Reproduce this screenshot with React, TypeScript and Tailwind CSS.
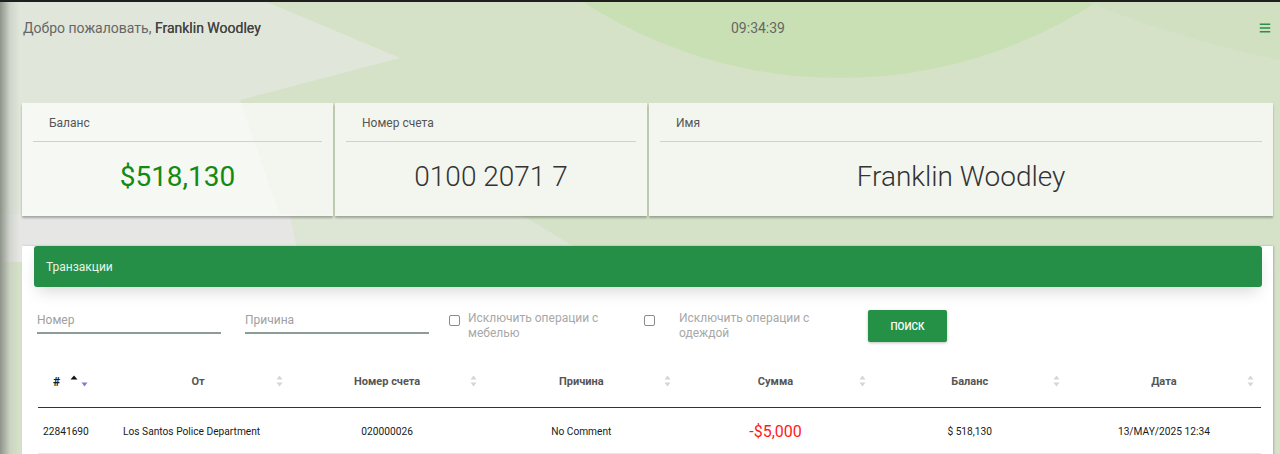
import { FaBars } from 'react-icons/fa'

const SortIcon = () => (
  <svg width="7" height="12" viewBox="0 0 7 12" className="absolute right-[7px] top-[15px]">
    <path d="M3.5 0.5L6.5 4.5H0.5z" fill="#d6d6d6" />
    <path d="M3.5 11.5L0.5 7.5H6.5z" fill="#d6d6d6" />
  </svg>
)

const ActiveSort = () => (
  <svg width="18" height="12" viewBox="0 0 18 12" className="ml-[10px]">
    <path d="M4 0.5L7.5 4.5H0.5z" fill="#111" />
    <path d="M14.5 11.5L11.5 7.5H17.5z" fill="#7b7fdc" />
  </svg>
)

const InfoCard = ({ label, value, valueClass }: { label: string; value: string; valueClass: string }) => (
  <div className="bg-white/70 px-[11px] pt-[10px] pb-[4px] shadow-[0_2px_2px_rgba(0,0,0,0.28)]">
    <div className="h-[28px] pl-[16px] pt-[1px] text-[12px] leading-[18px] text-[#555]">{label}</div>
    <div className="border-t border-[#cfd2cc]" />
    <div className={`flex h-[70px] items-center justify-center text-[28px] ${valueClass}`}>{value}</div>
  </div>
)

const Checkbox = ({ text, gap }: { text: string; gap: string }) => (
  <div className={`mt-[3px] flex items-start ${gap}`}>
    <div className="mt-[4px] h-[11px] w-[11px] shrink-0 rounded-[2px] border border-[#8a8a8a] bg-white" />
    <div className="w-[140px] text-[12px] leading-[15px] text-[#a8a8a8]">{text}</div>
  </div>
)

const columns = ['От', 'Номер счета', 'Причина', 'Сумма', 'Баланс', 'Дата']

export default function App() {
  return (
    <div className="relative min-h-[454px] w-full overflow-hidden bg-[#d5e2c7] font-['Roboto','Liberation_Sans',sans-serif]">
      {/* background decoration */}
      <svg className="absolute inset-0" width="1280" height="454" viewBox="0 0 1280 454">
        <polygon points="0,0 262,0 400,58 240,100 290,245 0,260" fill="#e0e6da" />
        <polygon points="0,214 290,214 300,262 0,262" fill="#e6e7e4" />
        <polygon points="290,214 520,214 600,262 300,262" fill="#dde5d4" />
        <circle cx="840" cy="-394" r="472" fill="#c9e0b4" />
        <path d="M1083 0 Q1180 40 1280 60 L1280 0z" fill="#d1e0c0" />
      </svg>
      <div className="absolute inset-y-0 left-0 w-[20px] bg-gradient-to-r from-[#8f948b] via-[#c4c9c0]/60 to-transparent" />
      <div className="relative h-[2px] bg-[#1f1f1f]" />

      <div className="relative pl-[22px] pr-[7px]">
        {/* top bar */}
        <div className="flex h-[52px] items-center text-[14px]">
          <div className="w-[709px] pl-[1px] text-[#666]">
            Добро пожаловать, <span className="text-[#444] [text-shadow:0_0_0.2px_#444]">Franklin Woodley</span>
          </div>
          <div className="text-[#666]">09:34:39</div>
          <div className="ml-auto mr-[2px] text-[#2b8f48]">
            <FaBars size={12} />
          </div>
        </div>

        {/* info cards */}
        <div className="mt-[49px] grid grid-cols-[311px_312px_1fr] gap-[2px]">
          <InfoCard label="Баланс" value="$518,130" valueClass="text-[#138a13]" />
          <InfoCard label="Номер счета" value="0100 2071 7" valueClass="font-light text-[#333]" />
          <InfoCard label="Имя" value="Franklin Woodley" valueClass="font-light text-[#333]" />
        </div>

        {/* transactions */}
        <div className="mt-[45px] bg-white pb-[10px] shadow-[1px_0_2px_rgba(0,0,0,0.2)]">
          <div className="relative -mt-[15px] mr-[11px] ml-[12px] flex h-[41px] items-center rounded-[3px] bg-[#258f47] px-[12px] text-[12px] text-[#eaf6e4] shadow-[0_8px_16px_-4px_rgba(0,0,0,0.16)]">
            Транзакции
          </div>

          <div className="mt-[21px] flex items-start pl-[15px]">
            <div className="h-[26px] w-[184px] border-b-2 border-[#8c9d97] text-[12px] leading-[24px] text-[#a0a0a0]">
              Номер
            </div>
            <div className="ml-[24px] h-[26px] w-[184px] border-b-2 border-[#8c9d97] text-[12px] leading-[24px] text-[#a0a0a0]">
              Причина
            </div>
            <div className="ml-[20px]">
              <Checkbox text="Исключить операции с мебелью" gap="gap-[8px]" />
            </div>
            <div className="ml-[36px]">
              <Checkbox text="Исключить операции с одеждой" gap="gap-[24px]" />
            </div>
            <button className="mt-[2px] ml-[49px] h-[32px] w-[79px] rounded-[2px] bg-[#249147] text-[10px] font-medium text-white shadow-[0_1px_3px_rgba(0,0,0,0.25)]">
              ПОИСК
            </button>
          </div>

          {/* table */}
          <div className="mt-[18px] mr-[12px] ml-[16px]">
            <div className="grid h-[48px] grid-cols-[68px_184px_repeat(5,1fr)] border-b-[1.5px] border-[#333] text-[11px] font-bold text-[#555]">
              <div className="flex items-start pt-[15px] pl-[15px] text-[#1a1a1a]">
                <span className="text-[12px] leading-[14px]">#</span>
                <ActiveSort />
              </div>
              {columns.map((c) => (
                <div key={c} className="relative pt-[14px] text-center leading-[16px]">
                  {c}
                  <SortIcon />
                </div>
              ))}
            </div>
            <div className="grid h-[46px] grid-cols-[68px_184px_repeat(5,1fr)] items-center border-b border-[#e6e6e6] pt-[2px] text-[10.2px] text-[#1a1a1a]">
              <div className="pl-[5px]">22841690</div>
              <div className="pl-[17px]">Los Santos Police Department</div>
              <div className="text-center">020000026</div>
              <div className="text-center">No Comment</div>
              <div className="text-center text-[16px] text-[#ff1a1a]">-$5,000</div>
              <div className="text-center">$ 518,130</div>
              <div className="text-center">13/MAY/2025 12:34</div>
            </div>
          </div>
        </div>
      </div>
    </div>
  )
}
